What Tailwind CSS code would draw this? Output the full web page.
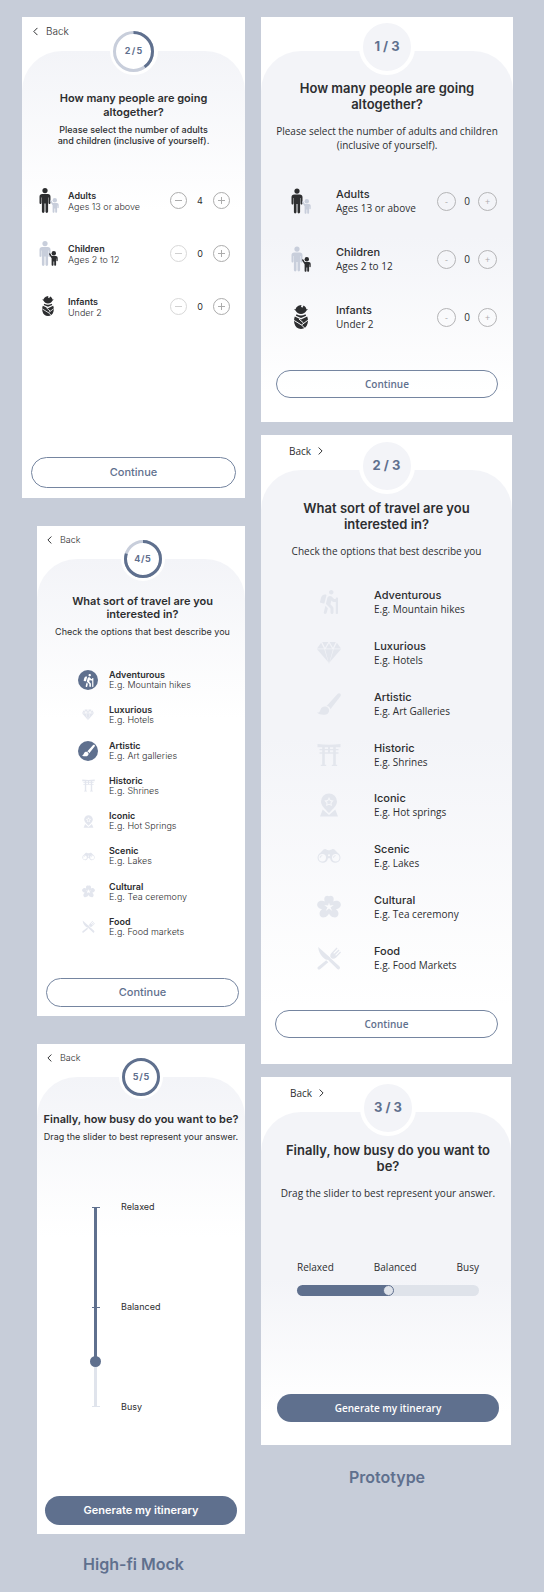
<!DOCTYPE html>
<html lang="en">
<head>
<meta charset="utf-8">
<meta name="viewport" content="width=device-width, initial-scale=1">
<title>Trip planner – High-fi Mock and Prototype</title>
<script src="https://cdn.jsdelivr.net/npm/@tailwindcss/browser@4"></script>
</head>
<body class="min-h-screen bg-[#c7cdd9] font-['Inter',sans-serif] text-[#2d2e30]">

<svg class="hidden" aria-hidden="true">
  <symbol id="chevron" viewBox="0 0 6 10"><path d="M5 1 1 5l4 4" fill="none" stroke="currentColor" stroke-width="1.2" stroke-linecap="round" stroke-linejoin="round"/></symbol>
  <symbol id="big" viewBox="0 0 12 25"><circle cx="6" cy="2.6" r="2.6"/><path d="M3.2 6h5.6c1.7 0 2.7 1 2.7 2.7v6.1c0 1.6-2 1.6-2 0V9.6h-.4v14c0 1.8-2.6 1.8-2.6 0v-8.2h-1v8.2c0 1.8-2.6 1.8-2.6 0v-14h-.4v5.2c0 1.6-2 1.6-2 0V8.700C.5 7 1.500 6 3.200 6z"/></symbol>
  <symbol id="small" viewBox="0 0 9 15"><circle cx="4.800" cy="2.300" r="2.200"/><path d="M.2 2.600C.6 2 1.200 2.200 1.500 2.800L2.800 5h4c1.200 0 1.900.8 1.900 1.900v2.600c0 1.100-1.300 1.100-1.300 0V7.600h-.3v6.200c0 1.300-1.900 1.300-1.900 0V10.400h-.7v3.400c0 1.300-1.900 1.300-1.900 0V7.200L.3 3.800C0 3.300 0 3 .2 2.600z"/></symbol>
  <symbol id="baby" viewBox="0 0 14 24"><path d="M6 .3 7.600 0 6.900 1.500l1.400 1.200L9.600.6c1.500.7 2.500 2.100 2.800 3.600H14l-1.700 1.600C11.500 7.800 9.500 9 7 9S2.500 7.800 1.700 5.800L0 4.200h1.600C2 2.300 3.700.8 6 .3z"/><path d="M2.500 9.300C5.300 11 8.700 11 11.500 9.300l.6 1.500L7 13 1.900 10.800z"/><path d="M.8 11.600 7 14.600l6.200-3c.9 2 .9 4.800.4 7-.8 3.400-3.200 5.400-6.600 5.400S1.200 22 .4 18.600c-.5-2.200-.5-5 .4-7z"/><path d="M.2 15.500 7.500 20l3.700 3.600M13.800 15.300 7.500 20M5 14l4.500 4" fill="none" stroke="#fafbfc" stroke-width="1"/></symbol>
  <symbol id="hike" viewBox="0 0 384 512"><path d="M80.950 472.230c-4.280 17.160 6.140 34.530 23.280 38.810 2.610.66 5.220.95 7.800.95 14.330 0 27.370-9.700 31.020-24.230l25.240-100.970-52.780-52.780-34.560 138.220zm14.890-196.120L137 117c2.190-8.420-3.140-16.950-11.920-19.060-43.880-10.520-88.350 15.070-99.320 57.170L.49 253.240c-2.190 8.420 3.140 16.950 11.920 19.060l63.560 15.250c8.790 2.100 17.680-3.020 19.870-11.440zM368 160h-16c-8.840 0-16 7.160-16 16v16h-34.750l-46.780-46.780C243.380 134.110 228.610 128 212.910 128c-27.020 0-50.470 18.300-57.030 44.520l-26.920 107.720a32.012 32.012 0 0 0 8.420 30.390L224 397.250V480c0 17.670 14.330 32 32 32s32-14.330 32-32v-82.750c0-17.090-6.660-33.160-18.750-45.250l-46.820-46.820c.15-.5.49-.89.62-1.410l19.890-79.570 22.430 22.430c6 6 14.140 9.380 22.620 9.380h48v240c0 8.840 7.160 16 16 16h16c8.840 0 16-7.160 16-16V176c.01-8.840-7.150-16-15.990-16zM240 96c26.510 0 48-21.490 48-48S266.510 0 240 0s-48 21.490-48 48 21.490 48 48 48z"/></symbol>
  <symbol id="gem" viewBox="0 0 24 24"><path d="M0 7.500 4.100 1.800 7 7.500zM5.200 1h6.200L8 6.800zM8.900 7.500 12 2.200l3.100 5.300zM12.600 1h6.200L16 6.800zM19.900 1.800 24 7.500h-7zM0 8.300h7.300l4 13zM8.100 8.300h7.800L12 23zM16.700 8.300H24l-11.300 13z"/></symbol>
  <symbol id="brush" viewBox="0 0 24 24"><path d="M9.600 14 20.500 1.900c2-1.900 4.500.5 2.800 2.600L13.400 17.200C13 15.400 11.800 14.300 9.600 14z"/><path d="M0 20.600c2.500.1 3-1.300 3.500-2.900 1-3.300 5.200-4.200 7.500-1.900 2.200 2.200 1.200 6.800-3.500 7C4.500 22.900 1.500 22.600 0 20.600z"/></symbol>
  <symbol id="torii" viewBox="0 0 24 24"><path d="M.5 1Q12 2.600 23.500 1v3.200H.5zM2.500 6h19v1.300h-2.700v2h2.700v1.500h-2.700v11h1.400V23h-5.400v-1.200h1.400v-11H7.800v11h1.400V23H3.800v-1.200h1.400v-11H2.500V9.300h2.700v-2H2.500zM7.800 7.300v2h3.200v-2zm5.200 0v2h3.200v-2zM5.200 3h2.600v4H5.200zm11 0h2.600v4h-2.600zM11 3h2v4h-2z"/></symbol>
  <symbol id="pin" viewBox="0 0 24 24"><path fill-rule="evenodd" d="M12 .5a8 8 0 0 1 8 8c0 4-3.500 7-8 11.500C7.500 15.500 4 12.500 4 8.500a8 8 0 0 1 8-8zm0 3.600-1.500 2.800-3.200.6 2.200 2.400-.4 3.200 2.900-1.400 2.900 1.400-.4-3.200 2.200-2.400-3.200-.6zm0 2.200.9 1.700 1.700.4-1.200 1.300.2 1.800-1.600-.8-1.600.8.2-1.800L9.400 8.400l1.700-.4z"/><path d="M5.700 16.500 12 22l6.300-5.500L21 23.500H3z"/></symbol>
  <symbol id="binoc" viewBox="0 0 24 24"><path fill-rule="evenodd" d="M6.500 5.600c1-.9 2.500-.9 3.300.1.500.6 3.900.6 4.400 0 .8-1 2.300-1 3.300-.1l3.600 3.700a5.200 5.200 0 1 1-8 4.900h-2.200a5.200 5.200 0 1 1-8-4.900zM5.300 10.100a3.700 3.700 0 1 0 0 7.400 3.700 3.700 0 0 0 0-7.400zm13.400 0a3.700 3.700 0 1 0 0 7.400 3.700 3.700 0 0 0 0-7.400zM12 10.300a1 1 0 1 0 0 2 1 1 0 0 0 0-2z"/><path d="M2.700 13.800a2.600 2.600 0 0 1 2.600-2.600v.9a1.700 1.700 0 0 0-1.700 1.700zM16.100 13.800a2.600 2.600 0 0 1 2.600-2.600v.9a1.700 1.700 0 0 0-1.700 1.700z"/></symbol>
  <symbol id="flower" viewBox="0 0 24 24"><path fill-rule="evenodd" d="M12 1.300c1.800-1.300 4.600-.2 4.700 2.500.1 1-.2 2-.5 2.700 1.200-.8 3.300-1.200 5-.4 2.700 1.200 3.300 4 2 5.600-.9 1.600-2.800 2.300-4.400 2.500 1.500.8 2.700 2.500 2.700 4.500 0 2.500-2.500 4.300-4.900 3.600-1.900 0-3.600-1.700-4.600-3.700-1 2-2.700 3.700-4.600 3.700-2.400.7-4.900-1.100-4.900-3.600 0-2 1.200-3.700 2.700-4.500C3.600 14 1.700 13.300.8 11.700c-1.300-1.600-.7-4.400 2-5.600 1.700-.8 3.800-.4 5 .4-.3-.7-.6-1.700-.5-2.700C7.400 1.100 10.200 0 12 1.300zM12 7.500l-.9 3.100-3.900-.5 3.300 2.300-1.800 3.500L12 13.600l3.300 2.300-1.800-3.500 3.300-2.300-3.900.5z"/></symbol>
  <symbol id="food" viewBox="0 0 24 24"><path d="M1.200.9 13 11.500l-2.700 2.600C5 11.800 1.500 6.500 1.200.9zM14 13.500l8.500 7.300c1.400 1.500-.7 3.600-2.200 2.200L12 14.800zM.9 20.900l8.300-6.700 2.100 2.100-8.200 6.900c-1.500 1.300-3.600-.9-2.200-2.300zM13.500 11.200c-.5-1.500-.2-3 .9-4.100L19.600 1.600l.9.900-4.200 4.600.8.700 4.500-4.300.9.900-4.300 4.600.7.700 4.300-4.100.9.900-5.200 5.200c-1.100 1.100-2.500 1.400-4 .9z"/><path d="M10 11 21 21" stroke="currentColor" stroke-width="3" stroke-linecap="round"/></symbol>
</svg>

<main class="grid grid-cols-[minmax(0,223fr)_minmax(0,252fr)] items-start gap-x-4 pt-[17px] pr-[31px] pb-4 pl-[22px]">

  <!-- High-fi Mock -->
  <div class="flex flex-col gap-7">

    <section class="bg-white">
      <header class="h-[34px] px-[11px] pt-2">
        <button class="flex items-center gap-2 text-[10px] leading-3 font-light"><svg class="h-[9px] w-[5px]"><use href="#chevron"/></svg>Back</button>
      </header>
      <div class="flow-root rounded-t-[40px] bg-[linear-gradient(#f3f4f8,#fff_160px)] px-[9px] pb-[10px]">
        <div class="relative mx-auto -mt-6 grid size-12 place-items-center rounded-full bg-white text-[9px] font-bold text-[#5f708e]">
          <svg class="col-start-1 row-start-1 size-[41px] -rotate-90" viewBox="0 0 41 41" fill="none" stroke-width="3"><circle cx="20.500" cy="20.500" r="19" stroke="#c8cedb"/><circle cx="20.500" cy="20.500" r="19" stroke="#5f708e" pathLength="5" stroke-dasharray="2 5"/></svg>
          <span class="col-start-1 row-start-1">2&#8201;/&#8201;5</span>
        </div>
        <h2 class="mt-4 text-center text-[11px] leading-[14px] font-semibold">How many people are going<br>altogether?</h2>
        <p class="mt-[5px] text-center text-[9px] leading-[11px] font-medium">Please select the number of adults<br>and children (inclusive of yourself).</p>
        <ul class="mt-[42px] flex flex-col gap-7 pr-[6px] pl-2">
          <li class="flex h-[25px] items-center">
            <svg class="mr-[9px] h-[25px] w-5" viewBox="0 0 20 25" fill="#2d2e30"><use href="#big" width="12" height="25"/><use href="#small" x="11" y="10" width="9" height="15" fill="#c8cedb"/></svg>
            <div class="flex-1 text-[9px] leading-[11px]"><h3 class="font-semibold">Adults</h3><p class="font-light">Ages 13 or above</p></div>
            <button aria-label="Fewer adults" class="grid size-[17px] place-items-center rounded-full border border-[#acacac] text-[#acacac]"><svg class="size-[7px]" viewBox="0 0 7 7" stroke="currentColor"><path d="M0 3.500h7"/></svg></button>
            <output class="w-[26px] text-center text-[9px]">4</output>
            <button aria-label="More adults" class="grid size-[17px] place-items-center rounded-full border border-[#acacac] text-[#acacac]"><svg class="size-[7px]" viewBox="0 0 7 7" stroke="currentColor"><path d="M0 3.500h7M3.500 0v7"/></svg></button>
          </li>
          <li class="flex h-[25px] items-center">
            <svg class="mr-[9px] h-[25px] w-5" viewBox="0 0 20 25" fill="#c8cedb"><use href="#big" width="12" height="25"/><use href="#small" x="10" y="10" width="9" height="15" fill="#2d2e30"/></svg>
            <div class="flex-1 text-[9px] leading-[11px]"><h3 class="font-semibold">Children</h3><p class="font-light">Ages 2 to 12</p></div>
            <button aria-label="Fewer children" class="grid size-[17px] place-items-center rounded-full border border-[#d8d8d8] text-[#d0d0d0]"><svg class="size-[7px]" viewBox="0 0 7 7" stroke="currentColor"><path d="M0 3.500h7"/></svg></button>
            <output class="w-[26px] text-center text-[9px]">0</output>
            <button aria-label="More children" class="grid size-[17px] place-items-center rounded-full border border-[#acacac] text-[#acacac]"><svg class="size-[7px]" viewBox="0 0 7 7" stroke="currentColor"><path d="M0 3.500h7M3.500 0v7"/></svg></button>
          </li>
          <li class="flex h-[25px] items-center">
            <svg class="mr-[9px] h-[25px] w-5" viewBox="0 0 20 25" fill="#2d2e30"><use href="#baby" x="3" y="2" width="12" height="20"/></svg>
            <div class="flex-1 text-[9px] leading-[11px]"><h3 class="font-semibold">Infants</h3><p class="font-light">Under 2</p></div>
            <button aria-label="Fewer infants" class="grid size-[17px] place-items-center rounded-full border border-[#d8d8d8] text-[#d0d0d0]"><svg class="size-[7px]" viewBox="0 0 7 7" stroke="currentColor"><path d="M0 3.500h7"/></svg></button>
            <output class="w-[26px] text-center text-[9px]">0</output>
            <button aria-label="More infants" class="grid size-[17px] place-items-center rounded-full border border-[#acacac] text-[#acacac]"><svg class="size-[7px]" viewBox="0 0 7 7" stroke="currentColor"><path d="M0 3.500h7M3.500 0v7"/></svg></button>
          </li>
        </ul>
        <button class="mt-[138px] h-[31px] w-full rounded-full border border-[#7585a0] text-[11px] font-medium text-[#5f708e]">Continue</button>
      </div>
    </section>

    <section class="ml-[15px] bg-white">
      <header class="h-[33px] px-[10px] pt-2">
        <button class="flex items-center gap-2 text-[9px] leading-3 font-light"><svg class="h-2 w-[5px]"><use href="#chevron"/></svg>Back</button>
      </header>
      <div class="flow-root rounded-t-[40px] bg-[linear-gradient(#f3f4f8,#fff_160px)] pr-[6px] pb-[9px] pl-[9px]">
        <div class="relative mx-auto -mt-[22px] grid size-11 place-items-center rounded-full bg-white text-[9px] font-bold text-[#5f708e]">
          <svg class="col-start-1 row-start-1 size-[38px] -rotate-90" viewBox="0 0 38 38" fill="none" stroke-width="3"><circle cx="19" cy="19" r="17.500" stroke="#c8cedb"/><circle cx="19" cy="19" r="17.500" stroke="#5f708e" pathLength="5" stroke-dasharray="4 5"/></svg>
          <span class="col-start-1 row-start-1">4&#8202;/&#8202;5</span>
        </div>
        <h2 class="mt-[14px] text-center text-[11px] leading-[13px] font-semibold">What sort of travel are you<br>interested in?</h2>
        <p class="mt-[5px] text-center text-[9px] leading-[11px]">Check the options that best describe you</p>
        <div class="mt-[33px] flex min-h-[267px] flex-col justify-between pl-8 text-[9px] leading-[10px]">
          <label class="relative flex items-center"><input type="checkbox" checked class="peer sr-only"><span class="mr-[11px] grid size-5 place-items-center rounded-full text-[#e3e6ee] peer-checked:bg-[#5f708e] peer-checked:text-white"><svg class="size-[13px]" fill="currentColor"><use href="#hike"/></svg></span><span><b class="block font-semibold">Adventurous</b><span class="block font-light">E.g. Mountain hikes</span></span></label>
          <label class="relative flex items-center"><input type="checkbox" class="peer sr-only"><span class="mr-[11px] grid size-5 place-items-center rounded-full text-[#e3e6ee] peer-checked:bg-[#5f708e] peer-checked:text-white"><svg class="size-3" fill="currentColor"><use href="#gem"/></svg></span><span><b class="block font-semibold">Luxurious</b><span class="block font-light">E.g. Hotels</span></span></label>
          <label class="relative flex items-center"><input type="checkbox" checked class="peer sr-only"><span class="mr-[11px] grid size-5 place-items-center rounded-full text-[#e3e6ee] peer-checked:bg-[#5f708e] peer-checked:text-white"><svg class="size-[13px]" fill="currentColor"><use href="#brush"/></svg></span><span><b class="block font-semibold">Artistic</b><span class="block font-light">E.g. Art galleries</span></span></label>
          <label class="relative flex items-center"><input type="checkbox" class="peer sr-only"><span class="mr-[11px] grid size-5 place-items-center rounded-full text-[#e3e6ee] peer-checked:bg-[#5f708e] peer-checked:text-white"><svg class="size-[13px]" fill="currentColor"><use href="#torii"/></svg></span><span><b class="block font-semibold">Historic</b><span class="block font-light">E.g. Shrines</span></span></label>
          <label class="relative flex items-center"><input type="checkbox" class="peer sr-only"><span class="mr-[11px] grid size-5 place-items-center rounded-full text-[#e3e6ee] peer-checked:bg-[#5f708e] peer-checked:text-white"><svg class="size-[13px]" fill="currentColor"><use href="#pin"/></svg></span><span><b class="block font-semibold">Iconic</b><span class="block font-light">E.g. Hot Springs</span></span></label>
          <label class="relative flex items-center"><input type="checkbox" class="peer sr-only"><span class="mr-[11px] grid size-5 place-items-center rounded-full text-[#e3e6ee] peer-checked:bg-[#5f708e] peer-checked:text-white"><svg class="size-[13px]" fill="currentColor"><use href="#binoc"/></svg></span><span><b class="block font-semibold">Scenic</b><span class="block font-light">E.g. Lakes</span></span></label>
          <label class="relative flex items-center"><input type="checkbox" class="peer sr-only"><span class="mr-[11px] grid size-5 place-items-center rounded-full text-[#e3e6ee] peer-checked:bg-[#5f708e] peer-checked:text-white"><svg class="size-[13px]" fill="currentColor"><use href="#flower"/></svg></span><span><b class="block font-semibold">Cultural</b><span class="block font-light">E.g. Tea ceremony</span></span></label>
          <label class="relative flex items-center"><input type="checkbox" class="peer sr-only"><span class="mr-[11px] grid size-5 place-items-center rounded-full text-[#e3e6ee] peer-checked:bg-[#5f708e] peer-checked:text-white"><svg class="size-[13px]" fill="currentColor"><use href="#food"/></svg></span><span><b class="block font-semibold">Food</b><span class="block font-light">E.g. Food markets</span></span></label>
        </div>
        <button class="mt-[41px] h-[29px] w-full rounded-full border border-[#7585a0] text-[11px] font-medium text-[#5f708e]">Continue</button>
      </div>
    </section>

    <section class="ml-[15px] bg-white">
      <header class="h-[33px] px-[10px] pt-2">
        <button class="flex items-center gap-2 text-[9px] leading-3 font-light"><svg class="h-2 w-[5px]"><use href="#chevron"/></svg>Back</button>
      </header>
      <div class="flow-root rounded-t-[40px] bg-[linear-gradient(#f3f4f8,#fff_160px)] px-2 pb-[9px]">
        <div class="relative mx-auto -mt-[22px] grid size-11 place-items-center rounded-full bg-white text-[9px] font-bold text-[#5f708e]">
          <svg class="col-start-1 row-start-1 size-[38px]" viewBox="0 0 38 38" fill="none" stroke-width="3"><circle cx="19" cy="19" r="17.500" stroke="#5f708e"/></svg>
          <span class="col-start-1 row-start-1">5&#8202;/&#8202;5</span>
        </div>
        <h2 class="-mx-2 mt-[14px] text-center text-[11px] leading-[13px] font-semibold">Finally, how busy do you want to be?</h2>
        <p class="-mx-2 mt-[5px] text-center text-[9px] leading-[11px]">Drag the slider to best represent your answer.</p>
        <div class="mt-[59px] flex items-center gap-5 pl-[45px]">
          <div class="relative h-[200px] w-[11px]">
            <div class="absolute inset-y-0 left-[2px] flex w-[8px] flex-col justify-between"><i class="h-px bg-[#5f708e]"></i><i class="h-px bg-[#5f708e]"></i><i class="h-px bg-[#e0e4ec]"></i></div>
            <input type="range" aria-label="How busy do you want to be" value="79" class="absolute inset-0 m-0 h-full w-[11px] appearance-none bg-[linear-gradient(#5f708e_77%,#e0e4ec_77%)] bg-[length:3px_100%] bg-center bg-no-repeat [writing-mode:vertical-lr] [&::-webkit-slider-thumb]:size-[11px] [&::-webkit-slider-thumb]:appearance-none [&::-webkit-slider-thumb]:rounded-full [&::-webkit-slider-thumb]:bg-[#5f708e]">
          </div>
          <div class="flex min-h-[212px] flex-col justify-between text-[9px] leading-3"><span>Relaxed</span><span>Balanced</span><span>Busy</span></div>
        </div>
        <button class="mt-[83px] h-[29px] w-full rounded-full bg-[#5f708e] text-[11px] font-semibold text-white">Generate my itinerary</button>
      </div>
    </section>

    <p class="-mt-2 text-center text-[16px] leading-5 font-semibold text-[#5f708e]">High-fi Mock</p>
  </div>

  <!-- Prototype -->
  <div class="flex flex-col gap-[13px] font-['Open_Sans',sans-serif]">

    <section class="bg-white">
      <div class="h-[34px]"></div>
      <div class="flow-root rounded-t-[40px] bg-[linear-gradient(#f3f4f8_50%,#fff_92%)] px-[15px] pb-6">
        <div class="relative mx-auto -mt-8 grid size-14 place-items-center rounded-full border-4 border-white bg-[#f3f4f8] font-['Inter'] text-[13px] font-bold text-[#5f708e]">1 / 3</div>
        <h2 class="mt-[5px] text-center font-['Inter'] text-[13px] leading-4 font-semibold">How many people are going<br>altogether?</h2>
        <p class="-mx-3 mt-3 text-center text-[10px] leading-[14px]">Please select the number of adults and children<br>(inclusive of yourself).</p>
        <ul class="mt-[35px] flex flex-col gap-[30px] pr-px pl-[15px]">
          <li class="flex items-center">
            <svg class="mr-[25px] h-[26px] w-5" viewBox="0 0 20 26" fill="#2d2e30"><use href="#big" width="12" height="26"/><use href="#small" x="11" y="11" width="9" height="15" fill="#c8cedb"/></svg>
            <div class="flex-1 text-[10px] leading-[14px]"><h3 class="font-['Inter'] text-[11px] font-medium">Adults</h3><p>Ages 13 or above</p></div>
            <button aria-label="Fewer adults" class="grid size-[19px] place-items-center rounded-full border border-[#b4b4b6] text-[9px] leading-none text-[#acacac]">-</button>
            <output class="w-[22px] text-center text-[10px]">0</output>
            <button aria-label="More adults" class="grid size-[19px] place-items-center rounded-full border border-[#b4b4b6] text-[9px] leading-none text-[#acacac]">+</button>
          </li>
          <li class="flex items-center">
            <svg class="mr-[25px] h-[26px] w-5" viewBox="0 0 20 26" fill="#c8cedb"><use href="#big" width="12" height="26"/><use href="#small" x="11" y="11" width="9" height="15" fill="#2d2e30"/></svg>
            <div class="flex-1 text-[10px] leading-[14px]"><h3 class="font-['Inter'] text-[11px] font-medium">Children</h3><p>Ages 2 to 12</p></div>
            <button aria-label="Fewer children" class="grid size-[19px] place-items-center rounded-full border border-[#b4b4b6] text-[9px] leading-none text-[#acacac]">-</button>
            <output class="w-[22px] text-center text-[10px]">0</output>
            <button aria-label="More children" class="grid size-[19px] place-items-center rounded-full border border-[#b4b4b6] text-[9px] leading-none text-[#acacac]">+</button>
          </li>
          <li class="flex items-center">
            <svg class="mr-[25px] h-[26px] w-5" viewBox="0 0 20 26" fill="#2d2e30"><use href="#baby" x="3" y="1" width="14" height="24"/></svg>
            <div class="flex-1 text-[10px] leading-[14px]"><h3 class="font-['Inter'] text-[11px] font-medium">Infants</h3><p>Under 2</p></div>
            <button aria-label="Fewer infants" class="grid size-[19px] place-items-center rounded-full border border-[#b4b4b6] text-[9px] leading-none text-[#acacac]">-</button>
            <output class="w-[22px] text-center text-[10px]">0</output>
            <button aria-label="More infants" class="grid size-[19px] place-items-center rounded-full border border-[#b4b4b6] text-[9px] leading-none text-[#acacac]">+</button>
          </li>
        </ul>
        <button class="mt-[39px] h-7 w-full rounded-full border border-[#7585a0] text-[10px] font-semibold text-[#5f708e]">Continue</button>
      </div>
    </section>

    <section class="mr-px bg-white">
      <header class="h-[35px] px-7 pt-[9px]">
        <button class="flex items-center gap-[7px] text-[10px] leading-[14px] font-medium">Back<svg class="h-2 w-[5px] rotate-180"><use href="#chevron"/></svg></button>
      </header>
      <div class="flow-root rounded-t-[40px] bg-[linear-gradient(#f3f4f8_45%,#fff_90%)] px-[14px] pb-[26px]">
        <div class="relative mx-auto -mt-8 grid size-14 place-items-center rounded-full border-4 border-white bg-[#f3f4f8] font-['Inter'] text-[13px] font-bold text-[#5f708e]">2 / 3</div>
        <h2 class="mt-[6px] text-center font-['Inter'] text-[13px] leading-4 font-semibold">What sort of travel are you<br>interested in?</h2>
        <p class="mt-3 text-center text-[10px] leading-[14px]">Check the options that best describe you</p>
        <div class="mt-[30px] flex min-h-[384px] flex-col justify-between pl-[42px] text-[10px] leading-[14px]">
          <label class="relative flex items-center"><input type="checkbox" class="peer sr-only"><svg class="mr-[33px] size-6 text-[#e3e6ed] peer-checked:text-[#5f708e]" fill="currentColor"><use href="#hike"/></svg><span><b class="block font-['Inter'] text-[11px] font-medium">Adventurous</b><span class="block">E.g. Mountain hikes</span></span></label>
          <label class="relative flex items-center"><input type="checkbox" class="peer sr-only"><svg class="mr-[33px] size-6 text-[#e3e6ed] peer-checked:text-[#5f708e]" fill="currentColor"><use href="#gem"/></svg><span><b class="block font-['Inter'] text-[11px] font-medium">Luxurious</b><span class="block">E.g. Hotels</span></span></label>
          <label class="relative flex items-center"><input type="checkbox" class="peer sr-only"><svg class="mr-[33px] size-6 text-[#e3e6ed] peer-checked:text-[#5f708e]" fill="currentColor"><use href="#brush"/></svg><span><b class="block font-['Inter'] text-[11px] font-medium">Artistic</b><span class="block">E.g. Art Galleries</span></span></label>
          <label class="relative flex items-center"><input type="checkbox" class="peer sr-only"><svg class="mr-[33px] size-6 text-[#e3e6ed] peer-checked:text-[#5f708e]" fill="currentColor"><use href="#torii"/></svg><span><b class="block font-['Inter'] text-[11px] font-medium">Historic</b><span class="block">E.g. Shrines</span></span></label>
          <label class="relative flex items-center"><input type="checkbox" class="peer sr-only"><svg class="mr-[33px] size-6 text-[#e3e6ed] peer-checked:text-[#5f708e]" fill="currentColor"><use href="#pin"/></svg><span><b class="block font-['Inter'] text-[11px] font-medium">Iconic</b><span class="block">E.g. Hot springs</span></span></label>
          <label class="relative flex items-center"><input type="checkbox" class="peer sr-only"><svg class="mr-[33px] size-6 text-[#e3e6ed] peer-checked:text-[#5f708e]" fill="currentColor"><use href="#binoc"/></svg><span><b class="block font-['Inter'] text-[11px] font-medium">Scenic</b><span class="block">E.g. Lakes</span></span></label>
          <label class="relative flex items-center"><input type="checkbox" class="peer sr-only"><svg class="mr-[33px] size-6 text-[#e3e6ed] peer-checked:text-[#5f708e]" fill="currentColor"><use href="#flower"/></svg><span><b class="block font-['Inter'] text-[11px] font-medium">Cultural</b><span class="block">E.g. Tea ceremony</span></span></label>
          <label class="relative flex items-center"><input type="checkbox" class="peer sr-only"><svg class="mr-[33px] size-6 text-[#e3e6ed] peer-checked:text-[#5f708e]" fill="currentColor"><use href="#food"/></svg><span><b class="block font-['Inter'] text-[11px] font-medium">Food</b><span class="block">E.g. Food Markets</span></span></label>
        </div>
        <button class="mt-[38px] h-7 w-full rounded-full border border-[#7585a0] text-[10px] font-semibold text-[#5f708e]">Continue</button>
      </div>
    </section>

    <section class="mr-[2px] bg-white">
      <header class="h-[35px] px-[29px] pt-[9px]">
        <button class="flex items-center gap-[7px] text-[10px] leading-[14px] font-medium">Back<svg class="h-2 w-[5px] rotate-180"><use href="#chevron"/></svg></button>
      </header>
      <div class="flow-root rounded-t-[40px] bg-[linear-gradient(#f3f4f8_50%,#fff_90%)] pr-3 pb-[23px] pl-4">
        <div class="relative mx-auto -mt-8 grid size-14 place-items-center rounded-full border-4 border-white bg-[#f3f4f8] font-['Inter'] text-[13px] font-bold text-[#5f708e]">3 / 3</div>
        <h2 class="-mx-2 mt-[6px] text-center font-['Inter'] text-[13px] leading-4 font-semibold">Finally, how busy do you want to<br>be?</h2>
        <p class="mt-3 text-center text-[10px] leading-[14px]">Drag the slider to best represent your answer.</p>
        <div class="mt-[60px] px-5">
          <div class="flex justify-between text-[10px] leading-[14px]"><span>Relaxed</span><span>Balanced</span><span>Busy</span></div>
          <input type="range" aria-label="How busy do you want to be" value="50" class="m-0 mt-[11px] block h-[11px] w-full appearance-none rounded-full bg-[linear-gradient(to_right,#5f708e_50%,#dfe3ea_50%)] [&::-webkit-slider-thumb]:size-[11px] [&::-webkit-slider-thumb]:appearance-none [&::-webkit-slider-thumb]:rounded-full [&::-webkit-slider-thumb]:border [&::-webkit-slider-thumb]:border-[#5f708e] [&::-webkit-slider-thumb]:bg-[#dfe3ea]">
        </div>
        <button class="mt-[98px] h-7 w-full rounded-full bg-[#5f708e] text-[10px] font-semibold text-white">Generate my itinerary</button>
      </div>
    </section>

    <p class="mt-[9px] text-center font-['Inter'] text-[16px] leading-5 font-semibold text-[#5f708e]">Prototype</p>
  </div>
</main>
</body>
</html>
